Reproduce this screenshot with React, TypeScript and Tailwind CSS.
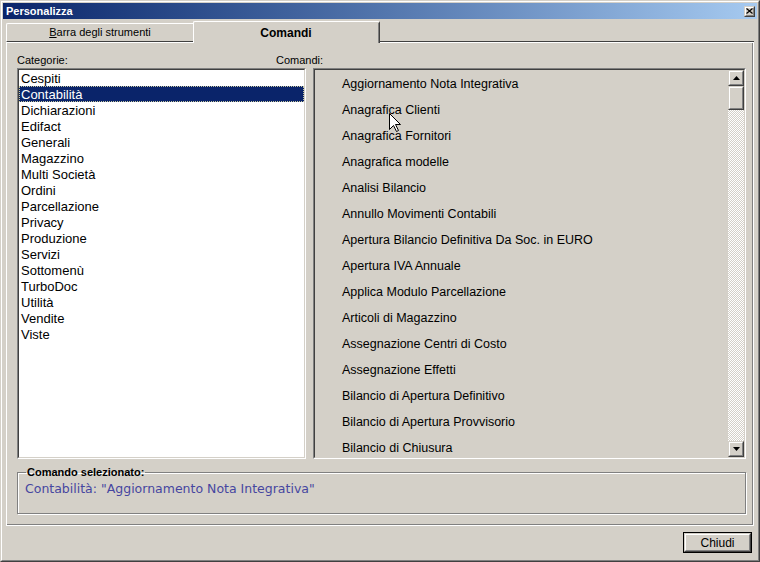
const categorie = [
  'Cespiti',
  'Contabilità',
  'Dichiarazioni',
  'Edifact',
  'Generali',
  'Magazzino',
  'Multi Società',
  'Ordini',
  'Parcellazione',
  'Privacy',
  'Produzione',
  'Servizi',
  'Sottomenù',
  'TurboDoc',
  'Utilità',
  'Vendite',
  'Viste',
]

const comandi = [
  'Aggiornamento Nota Integrativa',
  'Anagrafica Clienti',
  'Anagrafica Fornitori',
  'Anagrafica modelle',
  'Analisi Bilancio',
  'Annullo Movimenti Contabili',
  'Apertura Bilancio Definitiva Da Soc. in EURO',
  'Apertura IVA Annuale',
  'Applica Modulo Parcellazione',
  'Articoli di Magazzino',
  'Assegnazione Centri di Costo',
  'Assegnazione Effetti',
  'Bilancio di Apertura Definitivo',
  'Bilancio di Apertura Provvisorio',
  'Bilancio di Chiusura',
]

// raised 3d box used by buttons and scrollbar parts
function Raised({ className = '', children }: { className?: string; children?: React.ReactNode }) {
  return (
    <div className={`border border-[#d4d0c8] border-r-[#404040] border-b-[#404040] ${className}`}>
      <div className="w-full h-full border border-white border-r-[#808080] border-b-[#808080] bg-[#d4d0c8] flex items-center justify-center">
        {children}
      </div>
    </div>
  )
}

function Sunken({ className = '', inner = '', children }: { className?: string; inner?: string; children?: React.ReactNode }) {
  return (
    <div className={`border border-[#808080] border-r-white border-b-white ${className}`}>
      <div className={`w-full h-full border border-[#404040] border-r-[#d4d0c8] border-b-[#d4d0c8] ${inner}`}>{children}</div>
    </div>
  )
}

function Arrow({ down }: { down?: boolean }) {
  return (
    <svg width="7" height="4" viewBox="0 0 7 4">
      {down ? <path d="M0 0h7L3.5 4z" fill="#000" /> : <path d="M3.5 0L7 4H0z" fill="#000" />}
    </svg>
  )
}

export default function App() {
  return (
    <div className="relative w-[760px] h-[562px] border border-[#d4d0c8] border-r-[#404040] border-b-[#404040] font-['Liberation_Sans',Arial,sans-serif] text-black select-none">
      <div className="w-full h-full border border-white border-r-[#808080] border-b-[#808080] bg-[#d4d0c8] p-px flex flex-col">
        {/* title bar */}
        <div className="h-[16px] flex items-center justify-between pl-[3px] pr-[2px] bg-gradient-to-r from-[#0a246a] to-[#a6caf0]">
          <span className="text-white font-bold text-[11px] leading-none">Personalizza</span>
          <Raised className="w-[11px] h-[11px]">
            <svg width="7" height="6" viewBox="0 0 7 6">
              <path d="M0.5 0.5l6 5M6.5 0.5l-6 5" stroke="#000" strokeWidth="1.2" />
            </svg>
          </Raised>
        </div>

        {/* tabs */}
        <div className="mt-[2px] mx-[3px] h-[22px] flex items-stretch">
          <div className="w-[187px] flex flex-col justify-end border-b border-white">
            <div className="h-[19px] border-t border-l border-white border-b border-b-[#404040] rounded-tl-[2px] flex items-center justify-center text-[11px]">
              <span>
                <span className="underline">B</span>arra degli strumenti
              </span>
            </div>
          </div>
          <div className="w-[187px] border-t border-l border-white border-r border-r-[#404040] rounded-t-[2px] flex items-center justify-center pt-[1px]">
            <div className="w-full h-full border-r border-[#808080] flex items-center justify-center text-[12px] font-bold">Comandi</div>
          </div>
          <div className="flex-1 flex flex-col justify-end border-b border-white">
            <div className="h-[1px] bg-[#404040]" />
          </div>
        </div>

        {/* panel */}
        <div className="mx-[3px] h-[483px] border-l border-white border-r border-b border-[#404040] border-l-white">
          <div className="h-full border-r border-b border-[#808080] pl-[10px] pt-[10px] flex flex-col">
            <div className="h-[14px] flex items-center text-[11px] leading-none">
              <span className="w-[259px]">Categorie:</span>
              <span>Comandi:</span>
            </div>
            <div className="mt-[1px] flex gap-[7px]">
              {/* categories list */}
              <Sunken className="w-[289px] h-[391px]" inner="bg-white">
                <div className="flex flex-col text-[13px] leading-none">
                  {categorie.map((c) => (
                    <div
                      key={c}
                      className={`h-[16px] flex items-center pl-[2px] ${
                        c === 'Contabilità'
                          ? 'bg-[#0a246a] text-white outline outline-1 outline-dotted outline-[#c8c8a0] -outline-offset-1'
                          : ''
                      }`}
                    >
                      {c}
                    </div>
                  ))}
                </div>
              </Sunken>

              {/* commands list */}
              <Sunken className="w-[433px] h-[391px]" inner="bg-[#d4d0c8] flex">
                <div className="flex-1 flex flex-col pt-[1px] text-[12.5px] leading-none">
                  {comandi.map((c) => (
                    <div key={c} className="h-[26px] flex items-center pl-[27px] shrink-0">
                      {c}
                    </div>
                  ))}
                </div>
                <div className="w-[16px] flex flex-col">
                  <Raised className="w-[16px] h-[16px]">
                    <Arrow />
                  </Raised>
                  <Raised className="w-[16px] h-[24px]" />
                  <div className="flex-1 bg-[repeating-conic-gradient(#d4d0c8_0%_25%,#ffffff_0%_50%)] bg-[length:2px_2px]" />
                  <Raised className="w-[16px] h-[16px]">
                    <Arrow down />
                  </Raised>
                </div>
              </Sunken>
            </div>

            {/* selected command group */}
            <fieldset className="mt-[6px] w-[729px] h-[49px] border border-[#808080] shadow-[inset_1px_1px_0_#ffffff,1px_1px_0_#ffffff] pl-[8px] pr-[8px]">
              <legend className="px-[1px] text-[11px] font-bold leading-[14px]">Comando selezionato:</legend>
              <div className="-ml-[1px] mt-[4px] text-[12.5px] leading-none text-[#4646a0] font-['DejaVu_Sans',Verdana,sans-serif]">
                Contabilità: "Aggiornamento Nota Integrativa"
              </div>
            </fieldset>
          </div>
        </div>

        {/* bottom bar */}
        <div className="flex-1 flex justify-end items-start pt-[6px] pr-[5px]">
          <div className="w-[69px] h-[21px] border border-black">
            <Raised className="w-full h-full">
              <span className="text-[12px] leading-none">Chiudi</span>
            </Raised>
          </div>
        </div>
      </div>

      {/* mouse pointer */}
      <svg className="absolute left-[388px] top-[112px]" width="13" height="20" viewBox="0 0 13 20">
        <path d="M0.5 0.5V16.5L4.5 12.5L7.5 18.5L9.5 17.5L6.5 11.5H11.5Z" fill="#fff" stroke="#000" strokeWidth="1" />
      </svg>
    </div>
  )
}
